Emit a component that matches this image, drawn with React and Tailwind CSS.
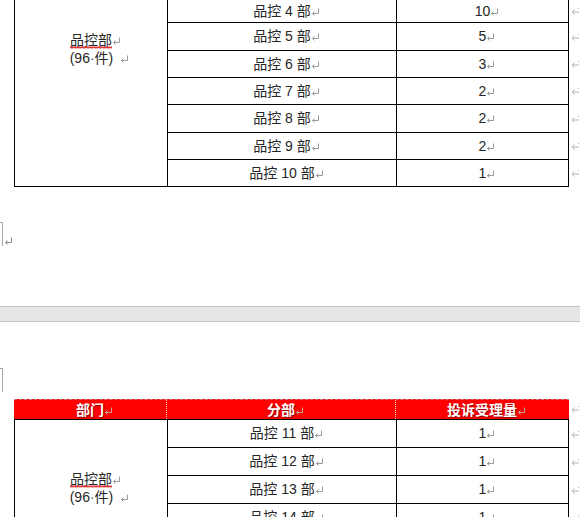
import React from "react";

const font = { fontFamily: '"Liberation Sans", "Noto Sans CJK SC", sans-serif' };

// Word paragraph mark (takes no width, so text centers like Word does)
const Pm = ({ className = "text-[#9a9a9a]" }) => (
  <svg width="8" height="8" viewBox="0 0 8 8" fill="none" stroke="currentColor" strokeWidth="1" className={`inline-block ml-[1px] mr-[-9px] ${className}`}>
    <path d="M6.5 0.5v5h-6M2.5 3.5l-2 2 2 2" />
  </svg>
);

// end-of-row mark
const RowMark = () => (
  <svg width="9" height="9" viewBox="0 0 9 9" fill="none" stroke="#b4b4b4" strokeWidth="1">
    <path d="M1 5h7M3.5 2.5L1 5l2.5 2.5M7.5 1v1" />
  </svg>
);

// spelling squiggle under a word
const Squiggle = ({ children }) => (
  <span className="inline-flex flex-col align-top">
    <span>{children}</span>
    <svg height="3" className="w-0 min-w-full mt-[-3px]">
      <defs>
        <pattern id="sq" width="4" height="3" patternUnits="userSpaceOnUse">
          <path d="M0 2.5L1 0.5L2 2.5L3 0.5L4 2.5" fill="none" stroke="#e02020" strokeWidth="0.9" />
        </pattern>
      </defs>
      <rect width="100%" height="3" fill="url(#sq)" />
    </svg>
  </span>
);

const Corner = () => (
  <div className="w-[3px] h-[24px] border-r border-t border-[#a8a8a8]" />
);

const firstRows = [
  { name: "品控 4 部", count: 10 },
  { name: "品控 5 部", count: 5 },
  { name: "品控 6 部", count: 3 },
  { name: "品控 7 部", count: 2 },
  { name: "品控 8 部", count: 2 },
  { name: "品控 9 部", count: 2 },
  { name: "品控 10 部", count: 1 },
];

const secondRows = [
  { name: "品控 11 部", count: 1 },
  { name: "品控 12 部", count: 1 },
  { name: "品控 13 部", count: 1 },
  { name: "品控 14 部", count: 1 },
];

const DeptCell = ({ span, top }) => (
  <div
    className="border-r border-b border-black flex flex-col items-center leading-[18px]"
    style={{ gridRow: `span ${span} / span ${span}`, paddingTop: top }}
  >
    <span className="h-[18px]">
      <Squiggle>品控部</Squiggle>
      <Pm />
    </span>
    <span className="pl-[8px]">
      (96<span className="text-[#555]">·</span>件)
      <span className="inline-block w-[7px]" />
      <Pm />
    </span>
  </div>
);

const BodyTable = ({ rows, heights, deptTop }) => (
  <div className="flex">
    <div
      className="grid grid-cols-[153px_229px_172px] border-l border-black w-[555px]"
      style={{ gridTemplateRows: heights.map((h) => `${h}px`).join(" ") }}
    >
      <DeptCell span={rows.length} top={deptTop} />
      {rows.map((r, i) => (
        <React.Fragment key={r.name}>
          <div
            className="border-r border-b border-black flex items-center justify-center"
            style={{ gridColumn: 2, gridRow: i + 1 }}
          >
            <span>{r.name}<Pm /></span>
          </div>
          <div
            className="border-r border-b border-black flex items-center justify-center"
            style={{ gridColumn: 3, gridRow: i + 1 }}
          >
            <span>{r.count}<Pm /></span>
          </div>
        </React.Fragment>
      ))}
    </div>
    <div className="flex flex-col pl-[2px]">
      {heights.map((h, i) => (
        <div key={i} className="flex items-center" style={{ height: h }}>
          <RowMark />
        </div>
      ))}
    </div>
  </div>
);

export default function App() {
  return (
    <div className="w-[580px] h-[517px] overflow-hidden bg-white text-[14px] text-[#262626]" style={font}>
      {/* page 1 tail: the table continues from above the view */}
      <div className="ml-[14px]">
        <BodyTable
          rows={firstRows}
          heights={[23, 28, 27, 27, 28, 27, 27]}
          deptTop={31}
        />
      </div>

      <div className="h-[119px] pt-[35px] flex items-start">
        <Corner />
        <span className="mt-[8px] ml-[1px]"><Pm className="text-[#8a8a8a]" /></span>
      </div>

      {/* page gap */}
      <div className="h-[16px] bg-[#e6e6e6] border-y border-[#c4c4c4]" />

      {/* page 2 head */}
      <div className="h-[77px] pt-[46px]">
        <Corner />
      </div>

      <div className="ml-[14px]">
        <div className="flex">
          <div className="w-[555px] border-t border-dashed border-[#c07878] grid grid-cols-[153px_229px_172px] h-[20px] bg-[#ff0000] text-white font-bold [text-shadow:1px_1px_1px_rgba(90,0,0,0.7)]">
            <div className="border-r border-dotted border-white/80 flex items-center justify-center">
              <span>部门<Pm className="text-[#c8a0a0]" /></span>
            </div>
            <div className="border-r border-dotted border-white/80 flex items-center justify-center">
              <span>分部<Pm className="text-[#c8a0a0]" /></span>
            </div>
            <div className="flex items-center justify-center">
              <span>投诉受理量<Pm className="text-[#c8a0a0]" /></span>
            </div>
          </div>
          <div className="pl-[2px] flex items-center">
            <RowMark />
          </div>
        </div>
        <div className="border-t border-black w-[555px]" />
        <BodyTable
          rows={secondRows}
          heights={[28, 28, 28, 28]}
          deptTop={50}
        />
      </div>
    </div>
  );
}
